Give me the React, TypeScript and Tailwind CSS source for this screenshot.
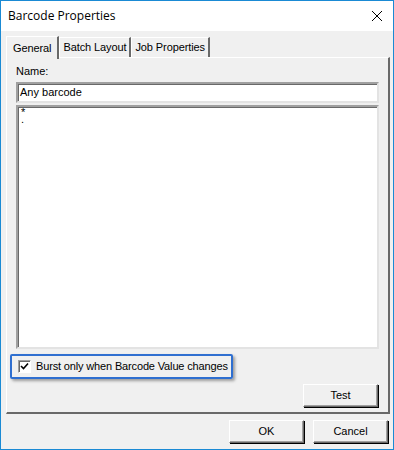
import React from "react";

const ui = { fontFamily: '"Liberation Sans", Arial, sans-serif' };

function Tab({ label, active }: { label: string; active?: boolean }) {
  return (
    <div
      className={
        "relative flex items-center border-t border-l border-white border-r-2 border-r-[#696969] bg-[#f0f0f0] text-[11px] tracking-[-0.1px] text-black " +
        (active ? "z-10 -mb-[2px] h-[23px] px-[6px]" : "h-[20px] px-[3px]")
      }
    >
      {label}
    </div>
  );
}

function Button({ label }: { label: string }) {
  return (
    <button className="flex h-[23px] w-[75px] items-center justify-center border border-t-white border-l-white border-r-[#696969] border-b-[#696969] bg-[#f0f0f0] text-[11px] text-black shadow-[inset_-1px_-1px_0_#a0a0a0,1px_1px_0_#000]">
      {label}
    </button>
  );
}

export default function App() {
  return (
    <div
      className="flex h-[450px] w-[394px] flex-col border border-[#1a8ad4] bg-[#f0f0f0]"
      style={ui}
    >
      <div className="flex h-[30px] items-center justify-between bg-white pl-[7px] pr-[8px]">
        <span className="text-[12px] text-black" style={{ fontFamily: '"Open Sans", "Noto Sans", sans-serif' }}>
          Barcode Properties
        </span>
        <svg width="12" height="12" viewBox="0 0 12 12" className="mr-[2px]">
          <path d="M1 1 L11 11 M11 1 L1 11" stroke="#000" strokeWidth="1" fill="none" />
        </svg>
      </div>

      <div className="flex flex-1 flex-col">
        <div className="ml-[5px] mt-[5px] flex items-end">
          <Tab label="General" active />
          <Tab label="Batch Layout" />
          <Tab label="Job Properties" />
        </div>

        <div className="ml-[5px] mr-[3px] flex h-[357px] flex-col border-t border-l border-white border-r-2 border-b-2 border-r-[#696969] border-b-[#696969] px-[9px] pt-[7px]">
          <div className="text-[11px] leading-[13px] text-black">Name:</div>
          <div className="mt-[4px] flex h-[21px] items-center border-2 border-t-[#a0a0a0] border-l-[#a0a0a0] border-r-[#e3e3e3] border-b-[#e3e3e3] bg-white pl-[2px] text-[11px] text-black shadow-[inset_1px_1px_0_#696969]">
            Any barcode
          </div>
          <div className="mt-[2px] h-[244px] border-2 border-t-[#a0a0a0] border-l-[#a0a0a0] border-r-[#e3e3e3] border-b-[#e3e3e3] bg-white pl-[3px] text-[11px] text-black shadow-[inset_1px_1px_0_#696969]">
            <div className="whitespace-pre-line pt-[2px] leading-[7px]">{"*\n."}</div>
          </div>

          <div className="-ml-[6px] mt-[5px] flex h-[25px] w-[223px] items-center rounded-[2px] border-2 border-[#2f6fd0] pl-[6px] shadow-[2px_2px_3px_rgba(0,0,0,0.35)]">
            <div className="flex h-[13px] w-[13px] items-center justify-center border border-t-[#a0a0a0] border-l-[#a0a0a0] border-r-white border-b-white bg-white shadow-[inset_1px_1px_0_#696969]">
              <svg width="9" height="9" viewBox="0 0 9 9">
                <path d="M1 4 L3.5 6.5 L8 1.5" stroke="#000" strokeWidth="1.6" fill="none" />
              </svg>
            </div>
            <span className="ml-[5px] whitespace-nowrap text-[11px] tracking-[-0.15px] text-black">Burst only when Barcode Value changes</span>
          </div>

          <div className="mt-[5px] flex justify-end pr-[1px]">
            <Button label="Test" />
          </div>
        </div>

        <div className="mr-[5px] mt-[6px] flex justify-end gap-[9px]">
          <Button label="OK" />
          <Button label="Cancel" />
        </div>
      </div>
    </div>
  );
}
